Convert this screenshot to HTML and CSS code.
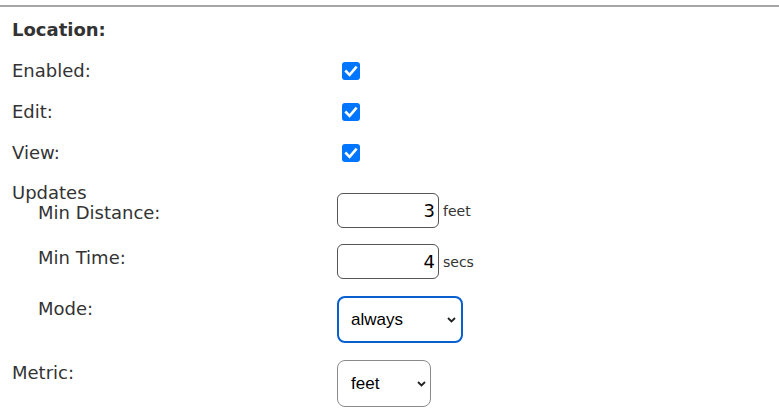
FILE: index.html
```html
<!DOCTYPE html>
<html>
<head>
<meta charset="utf-8">
<link rel="stylesheet" href="styles.css">
</head>
<body>
<div class="panel">
  <div class="heading">Location:</div>
  <div class="row check-row">
    <div class="label">Enabled:</div>
    <div class="ctrl"><span class="cb"><svg viewBox="0 0 18 18" width="18" height="18"><path d="M4.2 9.4 L7.6 12.8 L13.8 5.6" fill="none" stroke="#fff" stroke-width="2.6" stroke-linecap="square"/></svg></span></div>
  </div>
  <div class="row check-row">
    <div class="label">Edit:</div>
    <div class="ctrl"><span class="cb"><svg viewBox="0 0 18 18" width="18" height="18"><path d="M4.2 9.4 L7.6 12.8 L13.8 5.6" fill="none" stroke="#fff" stroke-width="2.6" stroke-linecap="square"/></svg></span></div>
  </div>
  <div class="row check-row">
    <div class="label">View:</div>
    <div class="ctrl"><span class="cb"><svg viewBox="0 0 18 18" width="18" height="18"><path d="M4.2 9.4 L7.6 12.8 L13.8 5.6" fill="none" stroke="#fff" stroke-width="2.6" stroke-linecap="square"/></svg></span></div>
  </div>
  <div class="group-title">Updates</div>
  <div class="row dist-row">
    <div class="label sub">Min Distance:</div>
    <div class="ctrl"><span class="num">3</span><span class="unit">feet</span></div>
  </div>
  <div class="row time-row">
    <div class="label sub">Min Time:</div>
    <div class="ctrl"><span class="num">4</span><span class="unit">secs</span></div>
  </div>
  <div class="row mode-row">
    <div class="label sub">Mode:</div>
    <div class="ctrl"><span class="sel sel-focus">always<svg class="chev" viewBox="0 0 9 6" width="9" height="6"><path d="M1 1 L4.5 4.5 L8 1" fill="none" stroke="#222" stroke-width="1.8"/></svg></span></div>
  </div>
  <div class="row metric-row">
    <div class="label">Metric:</div>
    <div class="ctrl"><span class="sel sel-metric">feet<svg class="chev" viewBox="0 0 9 6" width="9" height="6"><path d="M1 1 L4.5 4.5 L8 1" fill="none" stroke="#222" stroke-width="1.8"/></svg></span></div>
  </div>
</div>
</body>
</html>
```
FILE: styles.css
```css
html, body {
  margin: 0;
  padding: 0;
  background: #fff;
}
body {
  font-family: "DejaVu Sans", Verdana, sans-serif;
  font-size: 18px;
  color: #333;
}
.panel {
  margin-top: 5px;
  border-top: 2px solid #a6a6a6;
  padding: 13px 0 0 12px;
}
.heading {
  font-weight: bold;
  line-height: 20px;
  height: 20px;
  margin-bottom: 10px;
}
.row {
  display: flex;
  align-items: flex-start;
}
.label {
  width: 325px;
  flex: none;
  line-height: 20px;
}
.label.sub {
  padding-left: 26px;
  width: 299px;
}
.ctrl {
  display: flex;
  align-items: center;
}
.check-row {
  height: 41px;
  align-items: center;
}
.cb {
  width: 18px;
  height: 18px;
  background: #0075ff;
  border-radius: 3px;
  margin-left: 5px;
  display: flex;
}
.group-title {
  line-height: 20px;
  margin-top: 10px;
}
.dist-row {
  margin-top: -10px;
}
.dist-row .label { padding-top: 10px; }
.num {
  box-sizing: border-box;
  width: 102px;
  height: 35px;
  border: 1px solid #555;
  border-radius: 6px;
  text-align: right;
  padding: 0 3px;
  line-height: 33px;
  color: #000;
  font-size: 18px;
}
.unit {
  font-size: 14px;
  margin-left: 4px;
  color: #333;
}
.time-row { margin-top: 16px; }
.time-row .label { padding-top: 4px; }
.mode-row { margin-top: 17px; }
.mode-row .label { padding-top: 3px; }
.metric-row { margin-top: 17px; }
.metric-row .label { padding-top: 3px; }
.sel {
  box-sizing: border-box;
  display: flex;
  align-items: center;
  justify-content: space-between;
  height: 47px;
  border-radius: 8px;
  font-family: "Liberation Sans", Arial, sans-serif;
  color: #000;
  font-size: 17px;
}
.sel-focus {
  width: 126px;
  border: 2px solid #0a5fd0;
  padding: 0 5px 0 12px;
}
.sel-metric {
  width: 94px;
  border: 1px solid #8a8a8a;
  padding: 0 4px 0 13px;
}
.chev {
  display: block;
}
```
